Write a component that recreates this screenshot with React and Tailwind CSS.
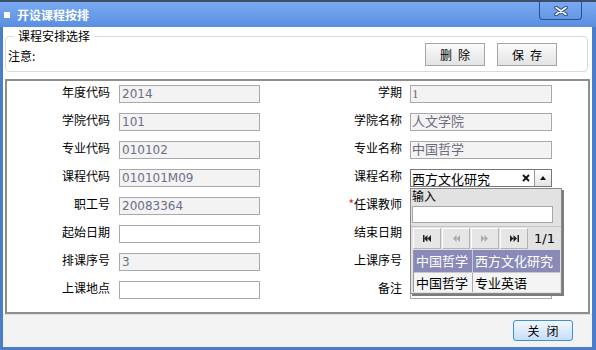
import React from 'react';

const leftRows = [
  { label: '年度代码', value: '2014' },
  { label: '学院代码', value: '101' },
  { label: '专业代码', value: '010102' },
  { label: '课程代码', value: '010101M09' },
  { label: '职工号', value: '20083364' },
  { label: '起始日期', value: '', editable: true },
  { label: '排课序号', value: '3' },
  { label: '上课地点', value: '', editable: true },
];

const rightRows = [
  { label: '学期', value: '1' },
  { label: '学院名称', value: '人文学院' },
  { label: '专业名称', value: '中国哲学' },
  { label: '课程名称', combo: true },
  { label: '任课教师', required: true, editable: true },
  { label: '结束日期', editable: true },
  { label: '上课序号', editable: true },
  { label: '备注', editable: true },
];

function Field({ value, editable, serif }) {
  return (
    <div
      className={`h-[18px] border border-[#a9a9a9] flex items-center overflow-hidden ${
        editable ? 'bg-white' : 'bg-[#f3f3f3]'
      } ${serif ? "pl-[1px] text-[#6b6b7b] text-[13px] font-['Liberation_Serif','Noto_Sans_CJK_SC',serif]" : "pl-[2px] text-[#6e6e88] text-[12px] font-['DejaVu_Sans',sans-serif]"}`}
    >
      {value}
    </div>
  );
}

function Combo() {
  return (
    <div className="h-[18px] border border-[#777] bg-white flex items-center">
      <span className="pl-[1px] flex-1 text-[13px] leading-none text-black">西方文化研究</span>
      <svg width="8" height="8" viewBox="0 0 8 8" className="mr-[4px]">
        <path d="M1 1 L7 7 M7 1 L1 7" stroke="#111" strokeWidth="1.8" />
      </svg>
      <div className="w-[17px] h-full border-l border-[#999] bg-linear-to-b from-white to-[#e4e4e4] flex items-center justify-center">
        <svg width="6" height="4" viewBox="0 0 6 4">
          <path d="M0 4 L3 0 L6 4 Z" fill="#111" />
        </svg>
      </div>
    </div>
  );
}

function PagerIcon({ dir, edge, color }) {
  const tri = dir === 'left'
    ? 'M4.5 0 L1 3.5 L4.5 7 Z M8 0 L4.5 3.5 L8 7 Z'
    : 'M0 0 L3.5 3.5 L0 7 Z M3.5 0 L7 3.5 L3.5 7 Z';
  return (
    <svg width="9" height="7" viewBox="0 0 9 7">
      <path d={tri} fill={color} />
      {edge && (
        dir === 'left'
          ? <rect x="0" y="0" width="1.5" height="7" fill={color} />
          : <rect x="7.5" y="0" width="1.5" height="7" fill={color} />
      )}
    </svg>
  );
}

function PagerButton({ children }) {
  return (
    <div className="w-[28px] h-[21px] bg-[#e6e6e6] border border-t-white border-l-white border-r-[#b4b4b4] border-b-[#b4b4b4] flex items-center justify-center">
      {children}
    </div>
  );
}

function Dropdown() {
  return (
    <div className="absolute left-[403px] top-[107px] w-[152px] h-[106px] bg-[#e2e2e2] border border-[#8a8a8a] shadow-[2px_2px_0_#7c7c7c] flex flex-col">
      <div className="pl-[1px] leading-[14px] text-[12px] text-black">输入</div>
      <div className="ml-[1px] mt-[3px] w-[141px] h-[17px] bg-white border border-[#a8a8a8]" />
      <div className="mt-[3px] border-t border-[#c4c4c4] pt-[1px] pl-[2px] flex items-center gap-[1px]">
        <PagerButton><PagerIcon dir="left" edge color="#222" /></PagerButton>
        <PagerButton><PagerIcon dir="left" color="#aaa" /></PagerButton>
        <PagerButton><PagerIcon dir="right" color="#aaa" /></PagerButton>
        <PagerButton><PagerIcon dir="right" edge color="#222" /></PagerButton>
        <span className="ml-[5px] text-[13px] leading-none font-['DejaVu_Sans',sans-serif] text-black">1/1</span>
      </div>
      <div className="ml-[2px] mt-[1px] w-[147px] border-l border-[#999]">
        <div className="flex h-[22px] bg-[#8a8ab8] text-white text-[13px] items-center">
          <span className="w-[59px] pl-[2px] border-r border-[#c8c8dc] h-full flex items-center">中国哲学</span>
          <span className="pl-[2px]">西方文化研究</span>
        </div>
        <div className="flex h-[20px] bg-[#f4f4f4] text-black text-[13px] items-center border-t border-[#c8c8c8]">
          <span className="w-[59px] pl-[2px] border-r border-[#aaa] h-full flex items-center">中国哲学</span>
          <span className="pl-[2px]">专业英语</span>
        </div>
      </div>
    </div>
  );
}

function GrayButton({ children }) {
  return (
    <button className="w-[60px] h-[23px] border border-[#a4a4a4] bg-linear-to-b from-[#fbfbfb] to-[#e3e3e3] text-[12px] text-black tracking-[6px] pl-[6px] flex items-center justify-center">
      {children}
    </button>
  );
}

export default function App() {
  return (
    <div className="w-[596px] h-[350px] bg-[#4a7ecb] flex flex-col overflow-hidden text-[12px] text-black font-['Noto_Sans_CJK_SC',sans-serif]">
      {/* title bar */}
      <div className="h-[27px] shrink-0 border-t-2 border-[#3c4f68] bg-linear-to-b from-[#7aaaf0] to-[#5a8ee0] flex items-center">
        <span className="ml-[4px] w-[6px] h-[6px] bg-white" />
        <span className="ml-[7px] text-white font-bold text-[12px] leading-none">开设课程按排</span>
        <div className="ml-auto mr-[14px] self-start w-[43px] h-[18px] border border-t-0 border-[#2b4e85] rounded-b-[4px] flex items-center justify-center">
          <svg width="14" height="10" viewBox="0 0 14 10">
            <path d="M2 1.5 L12 8.5 M12 1.5 L2 8.5" stroke="#28487c" strokeWidth="3.6" strokeLinecap="round" />
            <path d="M2 1.5 L12 8.5 M12 1.5 L2 8.5" stroke="#ffffff" strokeWidth="1.6" strokeLinecap="round" />
          </svg>
        </div>
      </div>

      {/* body */}
      <div className="flex-1 ml-[3px] mr-[4px] mb-[3px] bg-white flex flex-col">
        <fieldset className="mt-[2px] ml-[2px] mr-[4px] border border-[#d3dbe5] rounded-[4px] px-[2px] pb-[5px]">
          <legend className="ml-[6px] px-[4px] leading-[14px]">课程安排选择</legend>
          <div className="flex items-center h-[23px]">
            <span className="mt-[3px]">注意:</span>
            <div className="ml-auto mr-[28px] flex gap-[12px]">
              <GrayButton>删除</GrayButton>
              <GrayButton>保存</GrayButton>
            </div>
          </div>
        </fieldset>

        <div className="relative mt-[7px] mx-[2px] border-2 border-[#8e8e8e] pt-[4px] pb-[13px] flex flex-col gap-[10px]">
          {leftRows.map((l, i) => {
            const r = rightRows[i];
            return (
              <div key={i} className="flex h-[18px]">
                <div className="w-[103px] text-right leading-[14px]">{l.label}</div>
                <div className="ml-[9px] w-[141px]">
                  <Field value={l.value} editable={l.editable} />
                </div>
                <div className="w-[142px] text-right leading-[14px]">
                  {r.required && <span className="text-[#e02020]">*</span>}
                  {r.label}
                </div>
                <div className="ml-[8px] w-[142px]">
                  {r.combo ? <Combo /> : <Field value={r.value} editable={r.editable} serif />}
                </div>
              </div>
            );
          })}
          <Dropdown />
        </div>

        {/* footer */}
        <div className="flex-1 bg-[#f3f3f3] border-t border-[#dde3ea] flex justify-end items-start pt-[5px] pr-[19px]">
          <button className="w-[60px] h-[21px] border border-[#3d8fe0] rounded-[3px] bg-linear-to-b from-[#f2f8ff] to-[#c6def7] text-[12px] text-black tracking-[7px] pl-[7px] flex items-center justify-center">
            关闭
          </button>
        </div>
      </div>
    </div>
  );
}
